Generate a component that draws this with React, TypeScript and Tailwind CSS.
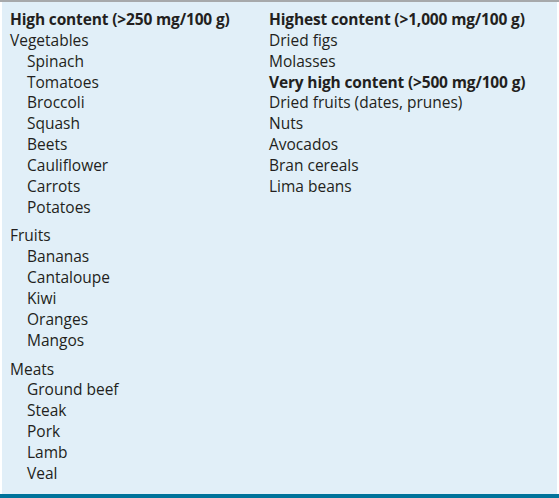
import React from "react";

type Group = { title: string; items: string[] };

const leftGroups: Group[] = [
  {
    title: "Vegetables",
    items: ["Spinach", "Tomatoes", "Broccoli", "Squash", "Beets", "Cauliflower", "Carrots", "Potatoes"],
  },
  { title: "Fruits", items: ["Bananas", "Cantaloupe", "Kiwi", "Oranges", "Mangos"] },
  { title: "Meats", items: ["Ground beef", "Steak", "Pork", "Lamb", "Veal"] },
];

const highest = ["Dried figs", "Molasses"];
const veryHigh = ["Dried fruits (dates, prunes)", "Nuts", "Avocados", "Bran cereals", "Lima beans"];

function Row({ children, bold, indent }: { children: React.ReactNode; bold?: boolean; indent?: boolean }) {
  return (
    <div className={`h-[20.85px] whitespace-nowrap ${bold ? "font-bold tracking-[-0.15px]" : ""} ${indent ? "pl-[17px]" : ""}`}>
      {children}
    </div>
  );
}

export default function App() {
  return (
    <div
      className="w-[559px] h-[498px] bg-white flex flex-col text-[15.5px] leading-[20.85px] text-[#231f20]"
      style={{ fontFamily: '"Open Sans", "Liberation Sans", sans-serif' }}
    >
      <div className="h-[2px] bg-[#a7a9ab]" />
      <div className="flex-1 mx-[2px] bg-[#e1eff8] grid grid-cols-[259px_1fr] pt-[7px] pl-[8px]">
        <div className="flex flex-col">
          <Row bold>High content (&gt;250 mg/100 g)</Row>
          <div className="flex flex-col gap-[8px]">
            {leftGroups.map((g) => (
              <div key={g.title}>
                <Row>{g.title}</Row>
                {g.items.map((it) => (
                  <Row key={it} indent>
                    {it}
                  </Row>
                ))}
              </div>
            ))}
          </div>
        </div>
        <div className="flex flex-col">
          <Row bold>Highest content (&gt;1,000 mg/100 g)</Row>
          {highest.map((it) => (
            <Row key={it}>{it}</Row>
          ))}
          <Row bold>Very high content (&gt;500 mg/100 g)</Row>
          {veryHigh.map((it) => (
            <Row key={it}>{it}</Row>
          ))}
        </div>
      </div>
      <div className="h-[4px] bg-[#00739b]" />
    </div>
  );
}
